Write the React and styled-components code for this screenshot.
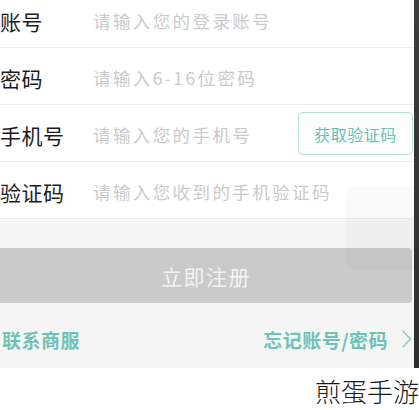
import React from "react";
import styled, { createGlobalStyle } from "styled-components";

const Global = createGlobalStyle`
  html, body { margin: 0; padding: 0; background: #ffffff; }
  body { font-family: "Noto Sans CJK SC", "Noto Sans", sans-serif; }
  * { box-sizing: border-box; }
`;

const Page = styled.div`
  width: 419px;
  height: 410px;
  overflow: hidden;
  display: flex;
  flex-direction: column;
  background: #ffffff;
`;

const Screen = styled.div`
  display: grid;
  grid-template-columns: 414px 5px;
  height: 368px;
`;

const Content = styled.div`
  position: relative;
  overflow: hidden;
  background: #f5f5f5;
  display: flex;
  flex-direction: column;
`;

const EdgeStrip = styled.div`
  background: linear-gradient(#3d3d3d, #2e2e2e);
`;

const Form = styled.div`
  margin-top: -9px;
  background: #ffffff;
  display: flex;
  flex-direction: column;
`;

const Row = styled.div`
  height: 57px;
  display: flex;
  align-items: center;
  border-bottom: 1px solid #ececec;
  padding-top: 3px;
`;

const Label = styled.span`
  width: 93px;
  flex: none;
  font-size: 21px;
  color: #1c1c1c;
  letter-spacing: 0.5px;
`;

const Placeholder = styled.span`
  flex: 1;
  font-size: 17.5px;
  color: #cacaca;
  letter-spacing: 2.4px;
  white-space: nowrap;
`;

const CodeButton = styled.div`
  width: 115px;
  height: 43px;
  margin-right: 1px;
  margin-top: -2px;
  border: 1.5px solid #b5e0d9;
  border-radius: 5px;
  background: #fcfefe;
  display: flex;
  align-items: center;
  justify-content: center;
  font-size: 16px;
  color: #6cc0b5;
  letter-spacing: 0.5px;
`;

const Spacer = styled.div`
  height: 29px;
`;

const RegisterButton = styled.div`
  width: 412px;
  height: 55px;
  background: #cacaca;
  border-radius: 0 4px 4px 0;
  display: flex;
  align-items: center;
  justify-content: center;
  font-size: 21px;
  color: #f3f3f3;
  letter-spacing: 1.5px;
`;

const LinksBar = styled.div`
  flex: 1;
  display: flex;
  align-items: center;
  justify-content: space-between;
  padding: 7px 2px 0 2px;
`;

const LinkText = styled.span`
  font-size: 19px;
  font-weight: 700;
  color: #6ec3b8;
  letter-spacing: 0.5px;
`;

const RightLink = styled.div`
  display: flex;
  align-items: center;
  gap: 13px;
`;

const Assist = styled.div`
  position: absolute;
  left: 346px;
  top: 187px;
  width: 90px;
  height: 83px;
  border-radius: 12px;
  background: rgba(0, 0, 0, 0.022);
  box-shadow: 0 0 3px rgba(0, 0, 0, 0.03);
`;

const Footer = styled.div`
  flex: 1;
  display: flex;
  align-items: center;
  justify-content: flex-end;
  padding-top: 2px;
`;

const Watermark = styled.span`
  font-size: 26px;
  font-weight: 300;
  color: #1a1a1a;
  white-space: nowrap;
`;

const Chevron = () => (
  <svg width="11" height="20" viewBox="0 0 11 20" style={{ display: "block" }}>
    <path d="M1.5 1.5 L9.5 10 L1.5 18.5" fill="none" stroke="#8fd0c7" strokeWidth="1.6" />
  </svg>
);

const rows = [
  { label: "账号", placeholder: "请输入您的登录账号" },
  { label: "密码", placeholder: "请输入6-16位密码" },
  { label: "手机号", placeholder: "请输入您的手机号", action: "获取验证码" },
  { label: "验证码", placeholder: "请输入您收到的手机验证码" },
];

export default function App() {
  return (
    <Page>
      <Global />
      <Screen>
        <Content>
          <Form>
            {rows.map((r) => (
              <Row key={r.label}>
                <Label>{r.label}</Label>
                <Placeholder>{r.placeholder}</Placeholder>
                {r.action && <CodeButton>{r.action}</CodeButton>}
              </Row>
            ))}
          </Form>
          <Spacer />
          <RegisterButton>立即注册</RegisterButton>
          <LinksBar>
            <LinkText>联系商服</LinkText>
            <RightLink>
              <LinkText>忘记账号/密码</LinkText>
              <Chevron />
            </RightLink>
          </LinksBar>
          <Assist />
        </Content>
        <EdgeStrip />
      </Screen>
      <Footer>
        <Watermark>煎蛋手游</Watermark>
      </Footer>
    </Page>
  );
}
